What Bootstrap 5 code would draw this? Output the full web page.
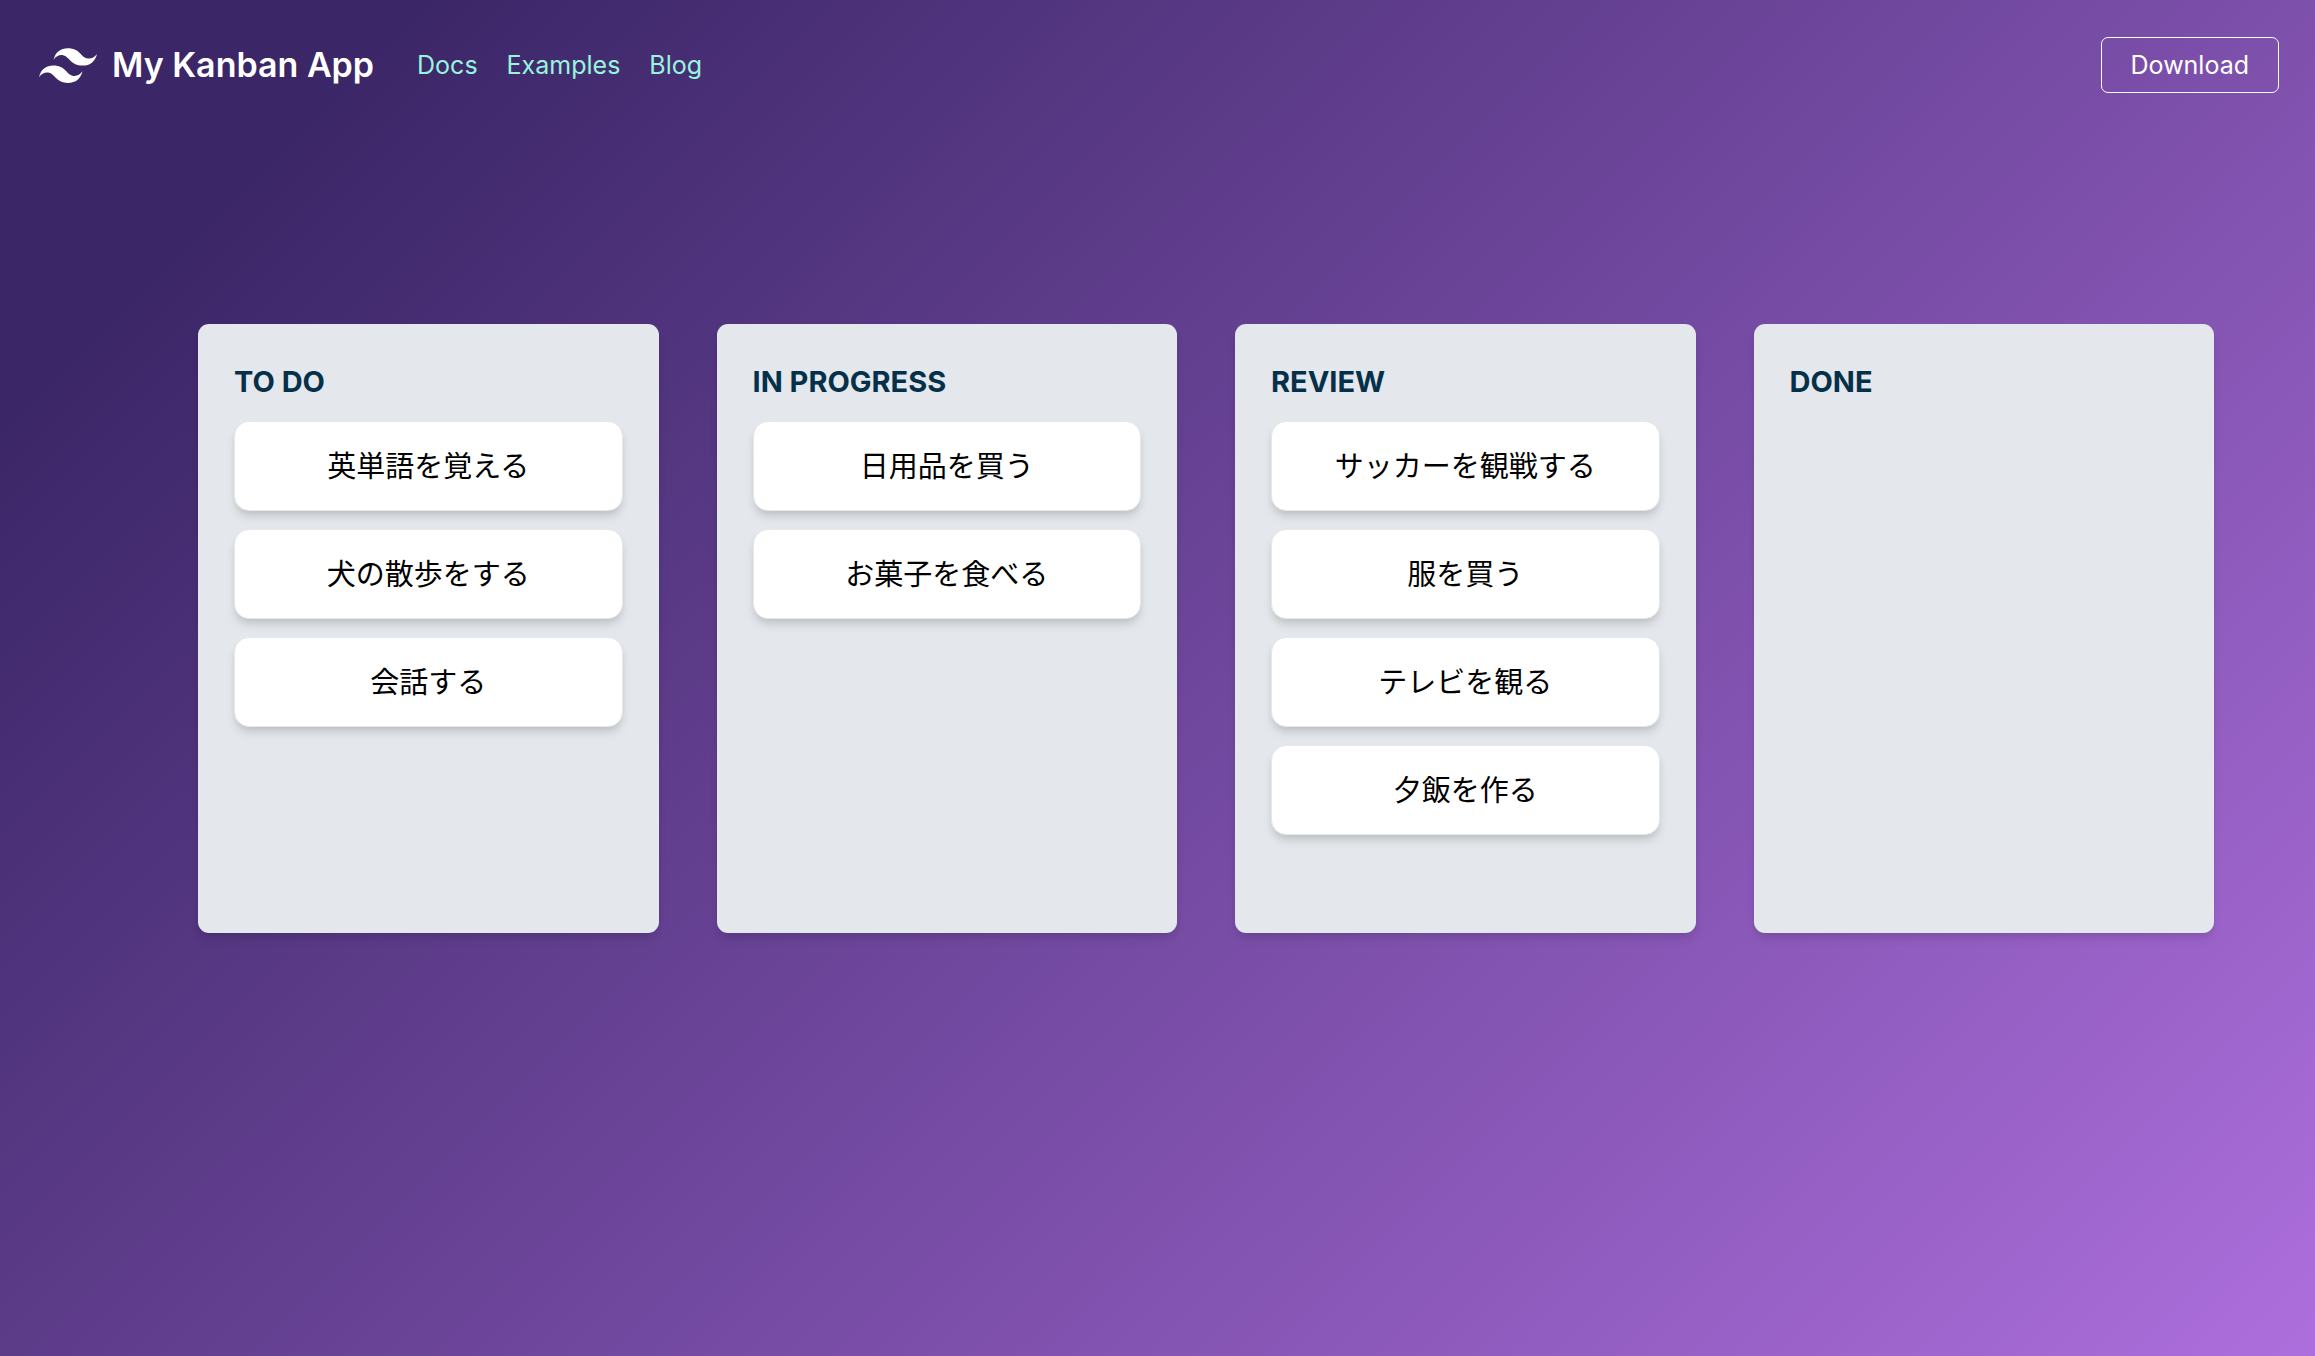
<!DOCTYPE html>
<html lang="ja">
<head>
<meta charset="utf-8">
<meta name="viewport" content="width=device-width, initial-scale=1">
<title>My Kanban App</title>
<link href="https://cdn.jsdelivr.net/npm/bootstrap@5.3.0/dist/css/bootstrap.min.css" rel="stylesheet">
<style>
  body {
    font-family: Inter, "Noto Sans CJK JP", sans-serif;
    color: #000;
    background: linear-gradient(135deg, #3b2667 11.2%, #bc78ec 111.7%) no-repeat #3b2667;
  }
  .app-header { padding: 36px 36px 36px 39px; }
  .app-brand { gap: 15px; margin-right: 43px; font-size: 34px; line-height: 56px; font-weight: 600; color: #fff; }
  .app-menu { gap: 29px; font-size: 25px; line-height: 36px; }
  .app-menu a { color: #97f5de; }
  .app-menu a:hover { color: #fff; }
  .btn-download {
    --bs-btn-color: #fff;
    --bs-btn-border-color: #fff;
    --bs-btn-hover-color: #553c9a;
    --bs-btn-hover-bg: #fff;
    --bs-btn-border-radius: 7px;
    --bs-btn-padding-x: 29px;
    --bs-btn-padding-y: 14px;
    --bs-btn-font-size: 25px;
    --bs-btn-line-height: 26px;
  }
  .board { gap: 58px; padding: 194px 101px 58px 198px; }
  .lane {
    flex: 1 1 0;
    min-width: 0;
    min-height: 609px;
    padding: 36px;
    border-radius: 11px;
    background: #e4e7eb;
    box-shadow: 0 7px 11px -2px rgba(0, 0, 0, .1), 0 4px 7px -2px rgba(0, 0, 0, .06);
  }
  .lane-title { margin: 0 0 18px; font-size: 29px; line-height: 43px; font-weight: 700; color: #05304a; }
  .lane-items { gap: 18px; }
  .task {
    padding: 23px 22px 21px;
    border: 1px solid #e4e7eb;
    border-radius: 15px;
    background: #fff;
    font-size: 29px;
    line-height: 44px;
    box-shadow: 0 7px 11px -2px rgba(0, 0, 0, .12), 0 4px 7px -2px rgba(0, 0, 0, .08);
  }
</style>
</head>
<body class="min-vh-100">
<header class="app-header d-flex align-items-center">
  <a class="app-brand d-flex align-items-center text-decoration-none" href="#">
    <svg width="58" height="58" viewBox="0 0 54 54" fill="currentColor" aria-hidden="true"><path d="M13.5 22.1c1.8-7.2 6.3-10.8 13.5-10.8 10.8 0 12.15 8.1 17.55 9.45 3.6.9 6.75-.45 9.45-4.05-1.8 7.2-6.3 10.8-13.5 10.8-10.8 0-12.15-8.1-17.55-9.45-3.6-.9-6.75.45-9.45 4.05zM0 38.3c1.8-7.2 6.3-10.8 13.5-10.8 10.8 0 12.15 8.1 17.55 9.45 3.6.9 6.75-.45 9.45-4.05-1.8 7.2-6.3 10.8-13.5 10.8-10.8 0-12.15-8.1-17.55-9.45-3.6-.9-6.75.45-9.45 4.05z"/></svg>
    <span>My Kanban App</span>
  </a>
  <nav class="app-menu d-flex flex-grow-1">
    <a class="text-decoration-none" href="#docs">Docs</a>
    <a class="text-decoration-none" href="#examples">Examples</a>
    <a class="text-decoration-none" href="#blog">Blog</a>
  </nav>
  <button type="button" class="btn btn-download">Download</button>
</header>
<main class="board d-flex">
  <section class="lane">
    <h2 class="lane-title">TO DO</h2>
    <ul class="lane-items list-unstyled d-flex flex-column text-center mb-0">
      <li class="task">英単語を覚える</li>
      <li class="task">犬の散歩をする</li>
      <li class="task">会話する</li>
    </ul>
  </section>
  <section class="lane">
    <h2 class="lane-title">IN PROGRESS</h2>
    <ul class="lane-items list-unstyled d-flex flex-column text-center mb-0">
      <li class="task">日用品を買う</li>
      <li class="task">お菓子を食べる</li>
    </ul>
  </section>
  <section class="lane">
    <h2 class="lane-title">REVIEW</h2>
    <ul class="lane-items list-unstyled d-flex flex-column text-center mb-0">
      <li class="task">サッカーを観戦する</li>
      <li class="task">服を買う</li>
      <li class="task">テレビを観る</li>
      <li class="task">夕飯を作る</li>
    </ul>
  </section>
  <section class="lane">
    <h2 class="lane-title">DONE</h2>
  </section>
</main>
<script src="https://cdn.jsdelivr.net/npm/bootstrap@5.3.0/dist/js/bootstrap.bundle.min.js"></script>
</body>
</html>
